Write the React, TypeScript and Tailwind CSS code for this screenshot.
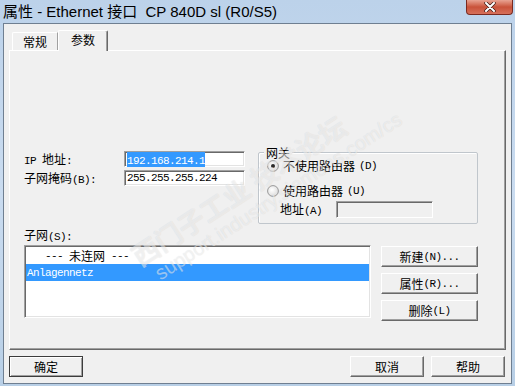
import React from "react";

const CJK = /[\u3000-\u9fff\uff00-\uffef]/;

// split a label into CJK runs and ascii runs, SimSun style widths
function Mix({ text }: { text: string }) {
  const parts = text.match(/[\u3000-\u9fff\uff00-\uffef]+|[^\u3000-\u9fff\uff00-\uffef]+/g) ?? [];
  return (
    <>
      {parts.map((p, i) =>
        CJK.test(p) ? (
          <span key={i} className="font-['Noto_Sans_CJK_SC',sans-serif] text-[12px]">
            {p}
          </span>
        ) : (
          <span key={i} className="font-['Liberation_Mono',monospace] text-[11px] tracking-[-0.6px] whitespace-pre">
            {p}
          </span>
        )
      )}
    </>
  );
}

function Btn({ label, w, def }: { label: string; w: string; def?: boolean }) {
  return (
    <div
      className={`${w} h-[21px] flex items-center justify-center bg-[#f0f0f0] text-black leading-[16px] border ${
        def
          ? "border-[#3c3c3c] shadow-[inset_1px_1px_#ffffff,inset_-1px_-1px_#a0a0a0]"
          : "border-t-white border-l-white border-r-[#696969] border-b-[#696969] shadow-[inset_-1px_-1px_#a0a0a0]"
      }`}
    >
      <Mix text={label} />
    </div>
  );
}

function Radio({ checked }: { checked?: boolean }) {
  return (
    <svg width="12" height="12" viewBox="0 0 12 12" className="shrink-0">
      <defs>
        <radialGradient id="rg" cx="40%" cy="40%" r="70%">
          <stop offset="0%" stopColor="#ffffff" />
          <stop offset="100%" stopColor="#d8d8d8" />
        </radialGradient>
      </defs>
      <circle cx="6" cy="6" r="5.4" fill="url(#rg)" stroke="#8e8f8f" strokeWidth="0.9" />
      {checked && <circle cx="6" cy="6" r="2" fill="#2a2a2a" />}
    </svg>
  );
}

const sunken =
  "border border-t-[#a0a0a0] border-l-[#a0a0a0] border-r-white border-b-white shadow-[inset_1px_1px_#696969,inset_-1px_-1px_#e3e3e3]";

export default function App() {
  return (
    <div className="relative w-[515px] h-[386px] overflow-hidden bg-gradient-to-b from-[#bcd2ea] via-[#cadcf0] to-[#b8cfe6] flex flex-col">
      {/* title bar */}
      <div className="h-[23px] flex items-start shrink-0">
        <div className="pl-[3px] pt-[3px] text-[15px] leading-[18px] text-black whitespace-pre font-['Liberation_Sans','Noto_Sans_CJK_SC',sans-serif]">
          属性 - Ethernet 接口  CP 840D sl (R0/S5)
        </div>
        <div className="ml-auto mr-[2px] w-[47px] h-[15px] rounded-b-[4px] border border-t-0 border-[#7b2a20] bg-gradient-to-b from-[#e8a393] via-[#c9523a] to-[#d6705a] flex items-center justify-center">
          <svg width="12" height="10" viewBox="0 0 12 10">
            <path d="M2 1 L10 9 M10 1 L2 9" stroke="#3a1a16" strokeWidth="3.4" strokeLinecap="round" />
            <path d="M2 1 L10 9 M10 1 L2 9" stroke="#ffffff" strokeWidth="2" strokeLinecap="round" />
          </svg>
        </div>
      </div>

      {/* client area */}
      <div className="mx-[3px] h-[361px] border border-[#6f7f91] bg-[#f0f0f0] flex flex-col px-[5px]">
        {/* tabs */}
        <div className="h-[26px] flex items-end pl-[3px] shrink-0">
          <div className="w-[46px] h-[18px] flex items-center justify-center border border-b-0 border-t-white border-l-white border-r-[#a0a0a0] rounded-tl-[2px] leading-[16px] text-black">
            <Mix text="常规" />
          </div>
          <div className="relative z-10 -mb-px w-[50px] h-[21px] pb-[2px] flex items-center justify-center bg-[#f0f0f0] border border-b-0 border-t-white border-l-white border-r-[#696969] shadow-[inset_-1px_0_#a0a0a0] rounded-t-[2px] leading-[16px] text-black">
            <Mix text="参数" />
          </div>
        </div>

        {/* tab panel */}
        <div className="w-[497px] h-[300px] border border-t-white border-l-white border-r-[#696969] border-b-[#696969] shadow-[inset_-1px_-1px_#a0a0a0] pl-[14px] pt-[94px] flex flex-col">
          <div className="flex items-start">
            <div className="w-[234px] pt-[6px] flex flex-col gap-[3px]">
              <div className="h-[16px] flex items-center">
                <div className="w-[100px] leading-[16px] text-black">
                  <Mix text="IP 地址:" />
                </div>
                <div className={`w-[121px] h-[16px] bg-white ${sunken} flex items-center pl-[2px]`}>
                  <span className="bg-[#3399ff] text-white leading-[12px]">
                    <Mix text="192.168.214.1" />
                  </span>
                </div>
              </div>
              <div className="h-[16px] flex items-center">
                <div className="w-[100px] leading-[16px] text-black">
                  <Mix text="子网掩码(B):" />
                </div>
                <div className={`w-[121px] h-[16px] bg-white ${sunken} flex items-center pl-[2px] text-black leading-[12px]`}>
                  <Mix text="255.255.255.224" />
                </div>
              </div>
            </div>

            {/* gateway group */}
            <div className="relative mt-[7px] w-[220px] h-[72px] border border-[#c0c6cc] shadow-[inset_1px_1px_#ffffff] rounded-[2px] flex flex-col pl-[8px] pt-[6px]">
              <div className="absolute -top-[8px] left-[5px] px-[2px] bg-[#f0f0f0] leading-[14px] text-black">
                <Mix text="网关" />
              </div>
              <div className="h-[14px] flex items-center gap-[4px] leading-[14px] text-black">
                <Radio checked />
                <Mix text="不使用路由器(D)" />
              </div>
              <div className="h-[14px] mt-[11px] flex items-center gap-[4px] leading-[14px] text-black">
                <Radio />
                <Mix text="使用路由器(U)" />
              </div>
              <div className="mt-[3px] flex items-center pl-[13px]">
                <div className="w-[56px] leading-[14px] text-black">
                  <Mix text="地址(A)" />
                </div>
                <div className="w-[97px] h-[17px] bg-[#f0f0f0] border border-t-[#a0a0a0] border-l-[#a0a0a0] border-r-white border-b-white shadow-[inset_1px_1px_#696969]" />
              </div>
            </div>
          </div>

          <div className="h-[16px] mt-[2px] leading-[16px] text-black">
            <Mix text="子网(S):" />
          </div>

          <div className="flex items-start mt-[3px]">
            <div className={`w-[347px] h-[73px] bg-white ${sunken} p-px flex flex-col`}>
              <div className="h-[17px] flex items-center pl-[1px] text-black leading-[14px]">
                <Mix text="   --- 未连网 ---" />
              </div>
              <div className="h-[17px] flex items-center pl-[1px] bg-[#3399ff] text-white leading-[14px]">
                <Mix text="Anlagennetz" />
              </div>
            </div>
            <div className="ml-[10px] pt-px flex flex-col gap-[6px]">
              <Btn label="新建(N)..." w="w-[97px]" />
              <Btn label="属性(R)..." w="w-[97px]" />
              <Btn label="删除(L)" w="w-[97px]" />
            </div>
          </div>
        </div>

        {/* bottom buttons */}
        <div className="mt-[6px] flex items-start pr-[1px]">
          <Btn label="确定" w="w-[74px]" def />
          <div className="ml-auto flex gap-[7px]">
            <Btn label="取消" w="w-[74px]" />
            <Btn label="帮助" w="w-[74px]" />
          </div>
        </div>
      </div>

      {/* forum watermark, faint */}
      <div className="pointer-events-none absolute left-[126px] top-[246px] -rotate-[33deg] origin-top-left flex flex-col text-white/50 [text-shadow:0_0_1px_rgba(0,0,0,0.12)]">
        <span className="font-['Noto_Sans_CJK_SC',sans-serif] font-bold text-[27px] leading-[30px] whitespace-pre">西门子工业 技术论坛</span>
        <span className="pl-[10px] font-['Liberation_Sans',sans-serif] text-[20px] leading-[22px] whitespace-pre">support.industry.siemens.com/cs</span>
      </div>
    </div>
  );
}
